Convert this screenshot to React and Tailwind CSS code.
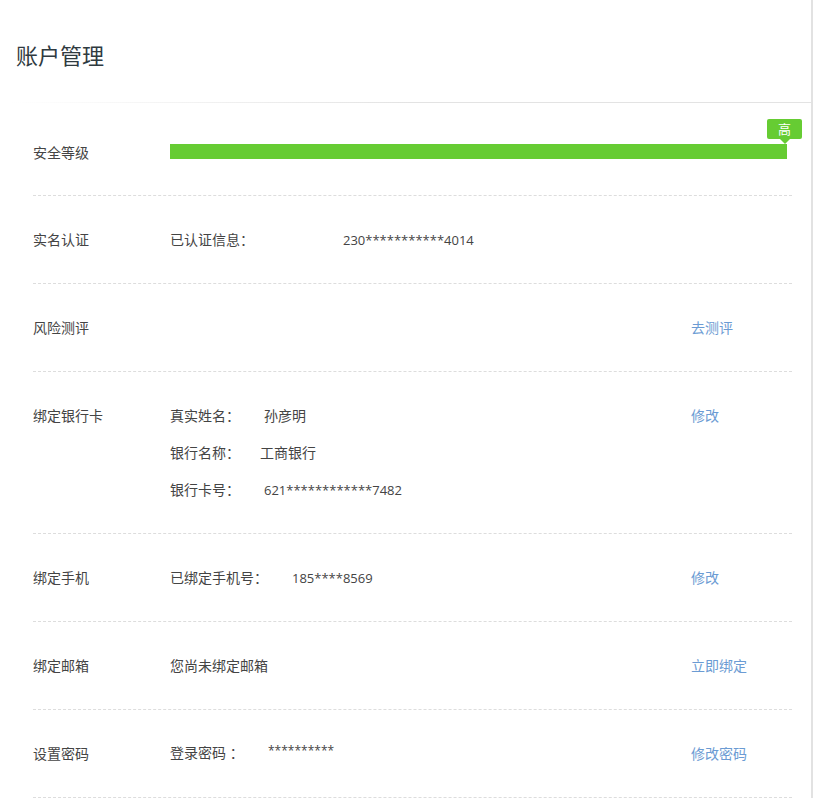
import React from "react";

const font = {
  fontFamily: '"Open Sans", "Noto Sans CJK SC", sans-serif',
};

function Row({ label, children, action, className = "h-[88px] items-center" }) {
  return (
    <div
      className={`flex border-b border-dashed border-[#dddddd] text-[14px] leading-[20px] text-[#444] ${className}`}
    >
      <div className="w-[137px] shrink-0">{label}</div>
      <div className="flex-1">{children}</div>
      <div className="w-[101px] shrink-0 text-[#6b9bd3]">{action}</div>
    </div>
  );
}

export default function App() {
  return (
    <div
      className="w-[813px] min-h-[798px] bg-white border-r-2 border-[#e2e2e2]"
      style={font}
    >
      {/* Header */}
      <div className="h-[102px] pl-4 pt-[41px]">
        <h1 className="text-[22px] leading-[28px] text-[#2f3a40]">账户管理</h1>
      </div>
      <div className="h-px ml-[10px] bg-gradient-to-r from-white via-[#e3e3e3] to-[#e3e3e3]" />

      <div className="pl-[33px] pr-[19px]">
        {/* 安全等级 */}
        <div className="flex h-[93px] items-center pt-[4px] border-b border-dashed border-[#dddddd] text-[14px] text-[#444]">
          <div className="w-[137px] shrink-0 pt-[2px]">安全等级</div>
          <div className="relative w-[617px] h-[15px] bg-[#66cc33]">
            <div className="absolute right-[-15px] top-[-25px] flex flex-col items-center">
              <div className="w-[35px] h-[20px] rounded-[2px] bg-[#66cc33] text-white text-[13px] leading-[20px] text-center">
                高
              </div>
              <div className="w-0 h-0 border-l-[5px] border-r-[5px] border-t-[5px] border-l-transparent border-r-transparent border-t-[#66cc33]" />
            </div>
          </div>
        </div>

        <Row label="实名认证">
          <span className="inline-block w-[173px]">已认证信息：</span>
          <span className="text-[13px]">230***********4014</span>
        </Row>

        <Row label="风险测评" action="去测评" />

        <Row
          label="绑定银行卡"
          action="修改"
          className="items-start pt-[34px] pb-[33px]"
        >
          <div className="flex flex-col gap-[17px]">
            <div>
              <span className="inline-block w-[94px]">真实姓名：</span>孙彦明
            </div>
            <div>
              <span className="inline-block w-[90px]">银行名称：</span>工商银行
            </div>
            <div>
              <span className="inline-block w-[94px]">银行卡号：</span>
              <span className="text-[13px]">621************7482</span>
            </div>
          </div>
        </Row>

        <Row label="绑定手机" action="修改">
          <span className="inline-block w-[122px]">已绑定手机号：</span>
          <span className="text-[13px]">185****8569</span>
        </Row>

        <Row label="绑定邮箱" action="立即绑定">
          您尚未绑定邮箱
        </Row>

        <Row label="设置密码" action="修改密码">
          <span className="inline-block w-[98px]">登录密码 ：</span>
          <span className="relative top-[-3px] text-[12px]">**********</span>
        </Row>
      </div>
    </div>
  );
}
